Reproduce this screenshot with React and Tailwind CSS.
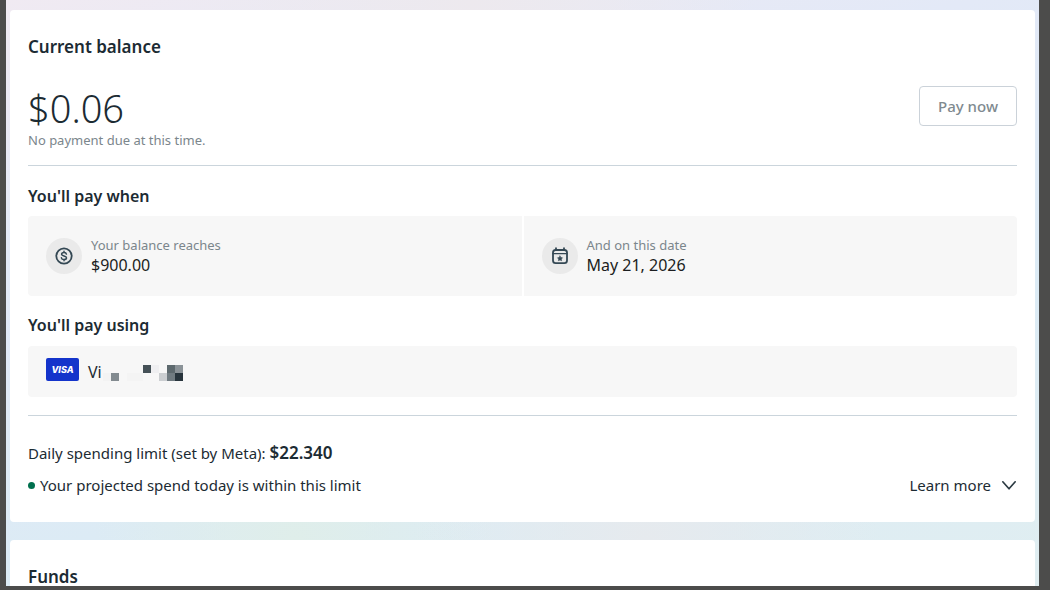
import React from "react";

// cells of the hidden card number, left to right, two rows
const hiddenDigits = [
  ["bg-transparent", "bg-[#f3f3f3]"],
  ["bg-transparent", "bg-[#838b90]"],
  ["bg-transparent", "bg-transparent"],
  ["bg-transparent", "bg-[#f4f4f4]"],
  ["bg-transparent", "bg-[#f4f4f4]"],
  ["bg-[#455157]", "bg-transparent"],
  ["bg-[#efeff1]", "bg-transparent"],
  ["bg-transparent", "bg-[#cbced1]"],
  ["bg-[#5d696e]", "bg-[#707b81]"],
  ["bg-[#8b9398]", "bg-[#27343c]"],
];

function DollarIcon() {
  return (
    <svg width="18" height="18" viewBox="0 0 18 18" fill="none" stroke="#344854" strokeLinecap="round" strokeLinejoin="round">
      <circle cx="9" cy="9" r="7.7" strokeWidth="1.8" />
      <path d="M11.4 7.1C11.2 6 10.2 5.4 9 5.4C7.6 5.4 6.6 6.1 6.6 7.2C6.6 9.6 11.5 8.2 11.5 10.7C11.5 11.9 10.4 12.6 9 12.6C7.6 12.6 6.6 11.9 6.4 10.8M9 4.2V5.4M9 12.6V13.8" strokeWidth="1.5" />
    </svg>
  );
}

function CalendarIcon() {
  return (
    <svg width="18" height="18" viewBox="0 0 18 18" fill="none" stroke="#344854" strokeLinecap="round" strokeLinejoin="round">
      <rect x="2" y="3" width="14" height="13.2" rx="2.6" strokeWidth="1.8" />
      <path d="M2 6.6H16" strokeWidth="1.4" />
      <path d="M5 1.2V3M13 1.2V3" strokeWidth="1.8" />
      <path d="M9 9L9.8 10.5L11.5 10.8L10.3 12L10.6 13.7L9 12.9L7.4 13.7L7.7 12L6.5 10.8L8.2 10.5Z" fill="#344854" strokeWidth="0.6" />
    </svg>
  );
}

function Condition({ icon, label, value }) {
  return (
    <div className="flex h-20 items-center gap-[9px] bg-[#f7f7f7] pl-[18px]">
      <span className="flex size-9 items-center justify-center rounded-full bg-[#eaeaea]">
        {icon}
      </span>
      <div className="pb-[2px]">
        <p className="text-[13px] leading-5 text-[#7b868c]">{label}</p>
        <p className="text-base leading-5 text-[#1c1e21]">{value}</p>
      </div>
    </div>
  );
}

export default function App() {
  return (
    <div className="h-screen overflow-hidden bg-[#4c4c4b] pb-1 pl-[6px] pr-[11px] font-['Noto_Sans',sans-serif] text-[#1c2b33]">
      <main className="flex h-full flex-col gap-[18px] overflow-hidden bg-[radial-gradient(circle_at_62%_92%,#e6eaee_0%,transparent_28%),radial-gradient(circle_at_28%_92%,#dfeeea_0%,transparent_22%),radial-gradient(circle_at_45%_0%,#ede9ee_0%,transparent_35%),linear-gradient(165deg,#f0eaf2_0%,#e3e9f7_30%,#dcebf5_65%,#e0eef1_100%)] px-1 pt-[10px]">
        <section className="shrink-0 rounded-[4px] bg-white px-[18px] py-[25px]">
          <h2 className="text-[17px] font-semibold leading-6">Current balance</h2>

          <div className="mt-[25px] flex items-start justify-between">
            <div>
              <p className="text-[38px] font-light leading-[48px]">$0.06</p>
              <p className="text-[13px] leading-4 text-[#7b868c]">No payment due at this time.</p>
            </div>
            <button
              type="button"
              className="mt-[2px] h-10 rounded-[4px] border border-[#cbd2d9] px-[18px] text-[15px] font-medium text-[#808a8f]"
            >
              Pay now
            </button>
          </div>

          <hr className="mt-[17px] border-[#cbd5dc]" />

          <h3 className="mt-[18px] text-base font-semibold leading-6">You'll pay when</h3>
          <div className="mt-2 grid grid-cols-2 gap-[2px] overflow-hidden rounded-[4px]">
            <Condition icon={<DollarIcon />} label="Your balance reaches" value="$900.00" />
            <Condition icon={<CalendarIcon />} label="And on this date" value="May 21, 2026" />
          </div>

          <h3 className="mt-[17px] text-base font-semibold leading-6">You'll pay using</h3>
          <div className="mt-[9px] flex h-[51px] items-center rounded-[4px] bg-[#f7f7f7] pl-[18px]">
            <span className="mb-1 flex h-[23px] w-[33px] items-center justify-center rounded-[2px] bg-[#1434cb] font-['Inter',sans-serif] text-[9px] font-extrabold italic text-white">
              VISA
            </span>
            <span className="ml-[9px] w-[15px] text-base leading-5">Vi</span>
            <span className="mt-[2px] flex" aria-hidden="true">
              {hiddenDigits.map(([top, bottom], i) => (
                <span key={i}>
                  <span className={`block size-2 ${top}`} />
                  <span className={`block size-2 ${bottom}`} />
                </span>
              ))}
            </span>
          </div>

          <hr className="mt-[18px] border-[#cbd5dc]" />

          <p className="mt-[25px] text-[15px] leading-6">
            Daily spending limit (set by Meta): <strong className="text-[17px] font-semibold leading-6">$22.340</strong>
          </p>
          <div className="mt-2 flex items-center justify-between">
            <p className="flex items-center gap-[5px] text-[15px] leading-6">
              <span className="size-[7px] rounded-full bg-[#00704e]" />
              Your projected spend today is within this limit
            </p>
            <button type="button" className="flex items-center gap-[10px] text-[15px] leading-6">
              Learn more
              <svg width="16" height="16" viewBox="0 0 16 16" fill="none" stroke="#2b3a42" strokeWidth="1.7" strokeLinecap="round" strokeLinejoin="round">
                <path d="M1.8 4.8L8 11.8L14.2 4.8" />
              </svg>
            </button>
          </div>
        </section>

        <section className="grow rounded-t-[4px] bg-white px-[18px] pt-[25px]">
          <h2 className="text-[17px] font-semibold leading-6">Funds</h2>
        </section>
      </main>
    </div>
  );
}
